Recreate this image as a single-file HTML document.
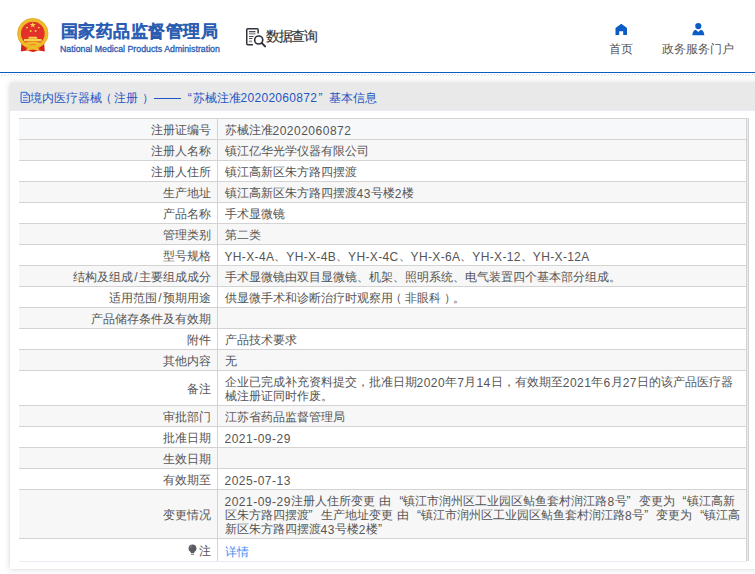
<!DOCTYPE html>
<html><head><meta charset="utf-8">
<style>
*{margin:0;padding:0;box-sizing:border-box}
html,body{width:755px;height:574px;overflow:hidden;background:#fff;font-family:"Liberation Sans",sans-serif;font-size:12px;color:#555}
.hdr{position:absolute;left:0;top:0;width:755px;height:73px;border-bottom:1px solid #0b5cc4}
.hatch{position:absolute;left:0;top:74px;width:755px;height:2px}
.emb{position:absolute;left:14px;top:15px;width:38px;height:40px}
.ttl{position:absolute;left:60.5px;top:20px;font-size:17px;color:#2a5cb2;-webkit-text-stroke:1px #2a5cb2;white-space:nowrap;letter-spacing:0.5px}
.sub{position:absolute;left:60px;top:44px;font-size:8.8px;color:#2a5cb2;-webkit-text-stroke:0.3px #2a5cb2;white-space:nowrap}
.dq{position:absolute;left:245px;top:27px;width:22px;height:22px}
.dqt{position:absolute;left:266px;top:27.5px;font-size:14px;color:#333;-webkit-text-stroke:0.15px #333;white-space:nowrap;letter-spacing:-1.4px}
.nav{position:absolute;top:41px;font-size:12px;color:#555;white-space:nowrap}
.ico{position:absolute}
.panel{position:absolute;left:10px;top:83px;width:760px;height:486px;background:#fff;box-shadow:0 0 6px rgba(0,0,0,0.18)}
.ph{position:absolute;left:0;top:0;width:100%;height:28px;background:#e9e9e9;border-bottom:1px solid #e9ecf4}
.pt{position:absolute;top:7px;color:#1f57c3;font-size:12px;white-space:nowrap;line-height:16px}
table{position:absolute;left:9px;top:35px;width:728px;border-collapse:collapse;table-layout:fixed}
td{border-top:1px solid #d3d3d3;line-height:14px;padding:4px 0 2px;vertical-align:middle;font-size:12px;color:#555;white-space:nowrap}
td.l{width:198px;text-align:right;padding-right:6px;border-right:1px solid #d3d3d3}
td.v{padding-left:7px;border-right:1px solid #d3d3d3}
tr.g td{background:#f7f7f7}
tr.h td{background:#f7f8fa}
tr.z td{height:23px;padding-top:4px;padding-bottom:3px;border-bottom:1px solid #eaecf3}
tr.z td.l{padding-right:6px}
.n{letter-spacing:0.5px;position:relative;top:1px}
.m{letter-spacing:0.35px;position:relative;top:1px}
.qo,.qc{display:inline-block;width:7.5px}
.qo{text-align:right}
.qc{text-align:left}
.sp{display:inline-block;width:4.5px}
.sl{margin:0 0.85px}
.po{position:relative;left:-2.5px}
.pc{position:relative;left:3.2px}
.bulb{display:inline-block;vertical-align:-1px;margin-right:2px}
.lk{color:#3f8cf2;position:relative;top:1px}
</style></head><body>
<div class="hdr">
 <svg class="emb" viewBox="0 0 38 40">
  <path d="M7.5 27 L6.8 36.4 L13 35.6 L19 37 L25 35.6 L30.8 36.4 L30 27 Z" fill="#d8231b"/>
  <circle cx="18.8" cy="18.6" r="15.2" fill="#f0bd2a" stroke="#e3a41c" stroke-width="0.8"/>
  <circle cx="18.8" cy="18.6" r="11.9" fill="#e2302a"/>
  <path d="M18.8 6.9l.75 2.1 2.2.05-1.75 1.35.65 2.15-1.85-1.3-1.85 1.3.65-2.15-1.75-1.35 2.2-.05z" fill="#f7d54a"/>
  <circle cx="12.9" cy="12.6" r="0.95" fill="#f7d54a"/><circle cx="24.8" cy="12.6" r="0.95" fill="#f7d54a"/>
  <circle cx="16.7" cy="16" r="0.95" fill="#f7d54a"/><circle cx="21.6" cy="16" r="0.95" fill="#f7d54a"/>
  <path d="M14 23.8 L15 21.8 H22.6 L23.6 23.8 Z" fill="#f7d54a"/>
  <rect x="10" y="24" width="17.6" height="2.4" fill="#f7d54a"/>
  <path d="M9 28.5 Q18.8 24.5 28.6 28.5 L27 31 Q18.8 28 10.6 31 Z" fill="#f0bd2a"/>
  <path d="M12 34 Q18.8 29.5 25.6 34 L24 36 Q18.8 33 13.6 36 Z" fill="#f0bd2a"/>
  <circle cx="18.8" cy="31.8" r="2" fill="#f0bd2a"/>
 </svg>
 <div class="ttl">国家药品监督管理局</div>
 <div class="sub">National Medical Products Administration</div>
 <svg class="dq" viewBox="0 0 22 22">
  <path d="M13.15 6.6V2.75a1 1 0 0 0-1-1H2.75a1 1 0 0 0-1 1v13.9a1 1 0 0 0 1 1H8" fill="none" stroke="#33333f" stroke-width="1.5"/>
  <path d="M4 4.5h6.5M4 9.5h4.5M4 11.5h3.5" stroke="#3a3a48" stroke-width="0.9"/>
  <path d="M4 6.5h6.5M4 14.3h3" stroke="#999" stroke-width="1.8"/>
  <circle cx="13.7" cy="13" r="4.05" fill="#fff" stroke="#2d2d3a" stroke-width="1.6"/>
  <path d="M16.6 15.9l3.5 3.5" stroke="#2d2d3a" stroke-width="2" stroke-linecap="round"/>
 </svg>
 <div class="dqt">数据查询</div>
 <svg class="ico" style="left:615px;top:23px" width="13" height="12" viewBox="0 0 13 12">
  <path d="M6.3 0.8 L12 5 V12 H8.2 V8.2 H4.2 V12 H0.5 V5 Z" fill="#0b5cc4"/>
 </svg>
 <div class="nav" style="left:609px">首页</div>
 <svg class="ico" style="left:692px;top:23px" width="13" height="13" viewBox="0 0 13 13">
  <circle cx="6.3" cy="3.1" r="3.1" fill="#0b5cc4"/>
  <path d="M0.3 12.2 Q0.6 7.4 3.8 6.8 L6.3 9 L8.8 6.8 Q12 7.4 12.3 12.2 Z" fill="#0b5cc4"/>
 </svg>
 <div class="nav" style="left:662px">政务服务门户</div>
</div>
<svg class="hatch" width="755" height="2" viewBox="0 0 755 2"><defs><pattern id="hp" width="3" height="2" patternUnits="userSpaceOnUse"><rect x="2" y="0" width="1" height="1" fill="#d6d6d6"/><rect x="1" y="1" width="1" height="1" fill="#e2e2e2"/></pattern></defs><rect width="755" height="2" fill="url(#hp)"/></svg>
<div class="panel">
 <div class="ph">
  <svg class="ico" style="left:10px;top:8px" width="11" height="13" viewBox="0 0 11 13">
   <path d="M1.1 1.3 H6.6 L9.4 4.1 V11.4 H1.1 Z" fill="none" stroke="#2a5fd0" stroke-width="1"/>
   <path d="M6.6 1.3 V4.1 H9.4" fill="none" stroke="#2a5fd0" stroke-width="0.8"/>
   <path d="M3.3 4.3h2.6M3 6.6h4.6M3 9.3h4.6" stroke="#3a6cd8" stroke-width="0.9"/>
  </svg>
  <span class="pt" style="left:19.5px">境内医疗器械</span>
  <span class="pt" style="left:89.5px">（</span>
  <span class="pt" style="left:104px">注册</span>
  <span class="pt" style="left:131.6px">）</span>
  <div style="position:absolute;left:144.3px;top:15px;width:26.6px;height:1.1px;background:#1f57c3"></div>
  <span class="pt" style="left:177.7px">“</span>
  <span class="pt" style="left:182.5px">苏械注准</span>
  <span class="pt" style="left:230.5px"><span class="n" style="top:0;letter-spacing:0.3px">20202060872</span></span>
  <span class="pt" style="left:308.5px">”</span>
  <span class="pt" style="left:319px">基本信息</span>
 </div>
 <div style="position:absolute;left:737px;top:35px;width:2px;height:443px;background:linear-gradient(to right,#eaecf3 1px,#d0d0d0 1px)"></div>
 <table>
<tr class="h"><td class="l">注册证编号</td><td class="v">苏械注准<span class="n">20202060872</span></td></tr>
<tr class="g"><td class="l">注册人名称</td><td class="v">镇江亿华光学仪器有限公司</td></tr>
<tr><td class="l">注册人住所</td><td class="v">镇江高新区朱方路四摆渡</td></tr>
<tr class="g"><td class="l">生产地址</td><td class="v">镇江高新区朱方路四摆渡<span class="n">43</span>号楼<span class="n">2</span>楼</td></tr>
<tr><td class="l">产品名称</td><td class="v">手术显微镜</td></tr>
<tr class="g"><td class="l">管理类别</td><td class="v">第二类</td></tr>
<tr><td class="l">型号规格</td><td class="v"><span class="m">YH-X-4A</span>、<span class="m">YH-X-4B</span>、<span class="m">YH-X-4C</span>、<span class="m">YH-X-6A</span>、<span class="m">YH-X-12</span>、<span class="m">YH-X-12A</span></td></tr>
<tr class="g"><td class="l">结构及组成<span class="sl">/</span>主要组成成分</td><td class="v">手术显微镜由双目显微镜、机架、照明系统、电气装置四个基本部分组成。</td></tr>
<tr><td class="l">适用范围<span class="sl">/</span>预期用途</td><td class="v">供显微手术和诊断治疗时观察用<span class="po">（</span>非眼科<span class="pc">）</span>。</td></tr>
<tr class="g"><td class="l">产品储存条件及有效期</td><td class="v"></td></tr>
<tr><td class="l">附件</td><td class="v">产品技术要求</td></tr>
<tr class="g"><td class="l">其他内容</td><td class="v">无</td></tr>
<tr><td class="l">备注</td><td class="v">企业已完成补充资料提交，批准日期<span class="n">2020</span>年<span class="n">7</span>月<span class="n">14</span>日，有效期至<span class="n">2021</span>年<span class="n">6</span>月<span class="n">27</span>日的该产品医疗器<br>械注册证同时作废。</td></tr>
<tr class="g"><td class="l">审批部门</td><td class="v">江苏省药品监督管理局</td></tr>
<tr><td class="l">批准日期</td><td class="v"><span class="n">2021-09-29</span></td></tr>
<tr class="g"><td class="l">生效日期</td><td class="v"></td></tr>
<tr><td class="l">有效期至</td><td class="v"><span class="n">2025-07-13</span></td></tr>
<tr class="g"><td class="l">变更情况</td><td class="v"><span class="n">2021-09-29</span>注册人住所变更<span class="sp"></span>由<span class="sp"></span><span class="qo">“</span>镇江市润州区工业园区鲇鱼套村润江路<span class="n">8</span>号<span class="qc">”</span><span class="sp"></span>变更为<span class="sp"></span><span class="qo">“</span>镇江高新<br>区朱方路四摆渡<span class="qc">”</span><span class="sp"></span>生产地址变更<span class="sp"></span>由<span class="sp"></span><span class="qo">“</span>镇江市润州区工业园区鲇鱼套村润江路<span class="n">8</span>号<span class="qc">”</span><span class="sp"></span>变更为<span class="sp"></span><span class="qo">“</span>镇江高<br>新区朱方路四摆渡<span class="n">43</span>号楼<span class="n">2</span>楼<span class="qc">”</span></td></tr>
<tr class="z"><td class="l"><svg class="bulb" width="9" height="12" viewBox="0 0 9 12"><path d="M4.5 0.5C2.2 0.5 0.5 2.2 0.5 4.4c0 1.6 0.9 2.7 1.9 3.4L3 9.2h3l0.6-1.4c1-0.7 1.9-1.8 1.9-3.4C8.5 2.2 6.8 0.5 4.5 0.5z" fill="#5a5a60"/><path d="M2 4.2C2 2.8 3 1.8 4.2 1.6" fill="none" stroke="#9a9aa8" stroke-width="0.8"/><rect x="3" y="10" width="3" height="1" fill="#888"/></svg>注</td><td class="v"><span class="lk">详情</span></td></tr>
 </table>
</div>
</body></html>
